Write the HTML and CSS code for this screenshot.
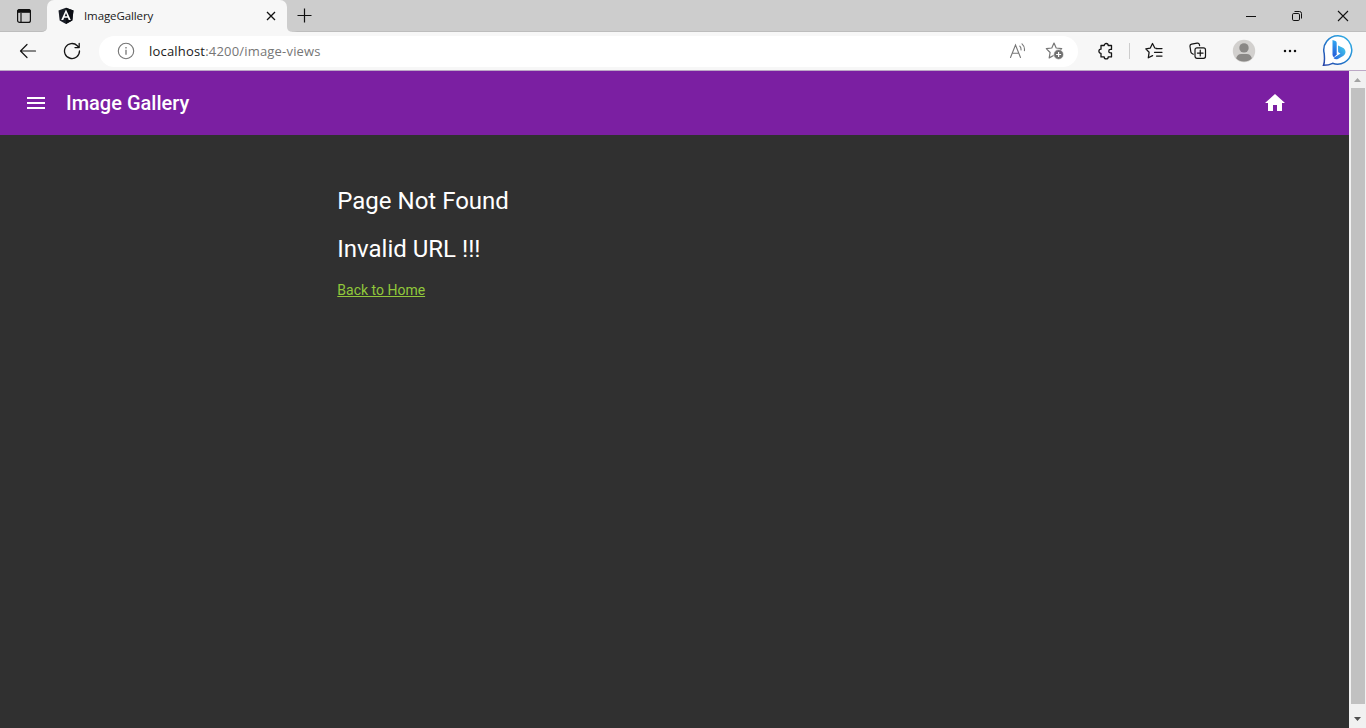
FILE: index.html
```html
<!DOCTYPE html>
<html lang="en">
<head>
<meta charset="utf-8">
<title>ImageGallery</title>
<link rel="stylesheet" href="styles.css">
</head>
<body>
<div class="browser">
  <div class="tabstrip">
    <div class="tab-menu">
      <svg width="16" height="16" viewBox="0 0 16 16" fill="none" stroke="#111" stroke-width="1.2"><rect x="1.6" y="1.6" width="12.8" height="12.8" rx="2"/><path d="M1.6 4.2V3.6a2 2 0 0 1 2-2h8.800a2 2 0 0 1 2 2v.6z" fill="#111"/><path d="M5 5v9.400"/></svg>
    </div>
    <div class="tab">
      <svg class="favicon" width="16" height="18" viewBox="0 0 16 18"><path d="M8 .8 15.500 3.400 14.300 13.400 8 17 1.700 13.400.5 3.400z" fill="#1b1e27"/><path d="M8 .8 15.500 3.400 14.300 13.400 8 17z" fill="#0c0e14"/><path d="M8 2.500 3.200 13h2.100l.8-2.200h3.800l.8 2.200h2.100zM8 6l1.300 3.200H6.700z" fill="#fff" fill-rule="evenodd"/></svg>
      <span class="tab-title">ImageGallery</span>
      <svg class="tab-close" width="10" height="10" viewBox="0 0 10 10" stroke="#111" stroke-width="1.300"><path d="m1 1 8 8M9 1 1 9"/></svg>
    </div>
    <svg class="new-tab" width="15" height="15" viewBox="0 0 15 15" stroke="#111" stroke-width="1.200"><path d="M7.500.5v14M.5 7.500h14"/></svg>
    <div class="window-buttons">
      <svg width="46" height="31" viewBox="0 0 46 31" stroke="#111"><path d="M18 16.500h10"/></svg>
      <svg width="46" height="31" viewBox="0 0 46 31" fill="none" stroke="#111"><rect x="18.500" y="13.500" width="7" height="7" rx="1.300"/><path d="M20.500 11.500h5a2 2 0 0 1 2 2v5"/></svg>
      <svg width="46" height="31" viewBox="0 0 46 31" stroke="#111" stroke-width="1.100"><path d="m18 11 10 10M28 11 18 21"/></svg>
    </div>
  </div>

  <div class="toolbar">
    <svg class="back" width="18" height="16" viewBox="0 0 18 16" fill="none" stroke="#151515" stroke-width="1.200" stroke-linecap="round" stroke-linejoin="round"><path d="M16.500 8H1.500M8 1.500 1.500 8 8 14.500"/></svg>
    <svg class="reload" width="18" height="18" viewBox="0 0 18 18" fill="none" stroke="#151515" stroke-width="1.300" stroke-linecap="round" stroke-linejoin="round"><path d="M16.500 9a7.500 7.500 0 1 1-2.200-5.300L16 5.500M16.200 1.400v4.200H12"/></svg>
    <div class="address">
      <svg class="info" width="18" height="18" viewBox="0 0 18 18" fill="none" stroke="#757575" stroke-width="1.100"><circle cx="9" cy="9" r="7.700"/><path d="M9 7.800v5M9 5v1.400" stroke-width="1.300"/></svg>
      <span class="url"><span class="host">localhost</span>:4200/image-views</span>
      <svg class="read-aloud" width="18" height="18" viewBox="0 0 18 18" fill="none" stroke="#777" stroke-width="1.100" stroke-linecap="round"><path d="m1.500 15.500 5-12.500 5 12.500M3.200 11.300h6.600M10.800 4.200q1.400 1.400 1.200 3.700M13 1.800q3 2.600 2.400 7"/></svg>
      <svg class="favorite-add" width="20" height="20" viewBox="0 0 20 20" fill="none" stroke="#777" stroke-width="1.200" stroke-linejoin="round"><path d="m9 2 2.200 5 5.500.6-4 3.800 1 5L9 14.300l-4.800 2.600.9-5.400-3.800-3.900L6.800 7z"/><circle cx="13.600" cy="13.500" r="4.900" fill="#707070" stroke="#fff" stroke-width=".6"/><path d="M13.600 11v5M11.100 13.500h5" stroke="#fff"/></svg>
    </div>
    <svg class="extensions" width="18" height="18" viewBox="0 0 18 18" fill="none" stroke="#151515" stroke-width="1.300" stroke-linejoin="round"><path d="M4 3.500h3.200a2 2 0 0 1 4 0h3.300v3.900h-1a1.750 1.750 0 0 0 0 3.500h1v4h-3.300a2 2 0 0 1-4 0H4v-3.500a2.100 2.100 0 0 1 0-4.200z"/></svg>
    <div class="divider"></div>
    <svg class="favorites" width="18" height="18" viewBox="0 0 18 18" fill="none" stroke="#151515" stroke-width="1.250" stroke-linecap="round" stroke-linejoin="round"><path d="M12.500 6.500 9.800 6 7.500 1.500 5.300 6.100.8 6.900l3.300 3.400-.8 5.500 4.300-2.200M11 6.500h6M9.500 10.300H17M11.500 14H17"/></svg>
    <svg class="collections" width="18" height="18" viewBox="0 0 18 18" fill="none" stroke="#151515" stroke-width="1.200" stroke-linecap="round"><path d="M4.300 12.200 3 11.500a2 2 0 0 1-1.100-1.400L1 4.500a2 2 0 0 1 1.600-2.300l5.500-1a2 2 0 0 1 2.300 1.500l.2.900"/><rect x="6" y="5.800" width="10.500" height="10.500" rx="2"/><path d="M11.250 8.200v5.700M8.400 11.050h5.700"/></svg>
    <svg class="profile" width="24" height="24" viewBox="0 0 24 24"><circle cx="12" cy="12" r="11.200" fill="#d2d0ce"/><circle cx="12" cy="8.900" r="4.700" fill="#8a8886"/><path d="M4.100 19.300q1.400-4.300 5-4.300h5.800q3.600 0 5 4.300a11.200 11.200 0 0 1-15.800 0z" fill="#8a8886"/></svg>
    <svg class="more" width="16" height="4" viewBox="0 0 16 4" fill="#111"><circle cx="3" cy="2" r="1.250"/><circle cx="8" cy="2" r="1.250"/><circle cx="13" cy="2" r="1.250"/></svg>
    <svg class="bing" width="32" height="34" viewBox="0 0 32 34">
      <defs>
        <linearGradient id="ring" x1="0" y1="1" x2="1" y2="0"><stop offset="0" stop-color="#2743a8"/><stop offset=".5" stop-color="#2180d0"/><stop offset="1" stop-color="#35b6e8"/></linearGradient>
        <linearGradient id="stem" x1="0" y1="0" x2="0" y2="1"><stop offset="0" stop-color="#31a9f2"/><stop offset="1" stop-color="#2458d7"/></linearGradient>
        <linearGradient id="bowl" x1="0" y1="1" x2="1" y2="0"><stop offset="0" stop-color="#2866df"/><stop offset="1" stop-color="#43d0ed"/></linearGradient>
      </defs>
      <path d="M16 1.800A14.200 14.200 0 1 1 10.600 29.300Q7 31.300 1.500 31.300 3 28 2.200 19.500A14.200 14.200 0 0 1 16 1.800z" fill="#fff" stroke="url(#ring)" stroke-width="1.500"/>
      <path d="m10.500 6 3 1.100q1.200.5 1.200 1.800v11.600l-2.700 2.700q-1.500-.6-1.500-2.600z" fill="url(#stem)"/>
      <path d="m16 11.400 4.300 2.100q3.300 1.500 3.200 4.700-.1 2.300-2 3.600l-5.200 3q-2.800 1.400-4.800-.8l7-4.500-1.400-.7q-.8-.4-1-1.300z" fill="url(#bowl)"/>
    </svg>
  </div>

  <div class="viewport">
    <div class="app">
      <header class="app-bar">
        <svg class="menu" width="24" height="24" viewBox="0 0 24 24" fill="#fff"><path d="M3 18h18v-2H3zm0-5h18v-2H3zm0-7v2h18V6z"/></svg>
        <h1 class="brand">Image Gallery</h1>
        <svg class="home" width="24" height="24" viewBox="0 0 24 24" fill="#fff"><path d="M10 20v-6h4v6h5v-8h3L12 3 2 12h3v8z"/></svg>
      </header>
      <main class="content">
        <h2 class="message">Page Not Found</h2>
        <h2 class="message">Invalid URL !!!</h2>
        <a class="home-link" href="#">Back to Home</a>
      </main>
    </div>
    <div class="scrollbar">
      <svg width="17" height="17" viewBox="0 0 17 17"><path d="m5 11 3.500-4 3.500 4z" fill="#a3a3a3"/></svg>
      <div class="thumb"></div>
      <svg width="17" height="17" viewBox="0 0 17 17"><path d="m5 6 3.500 4L12 6z" fill="#505050"/></svg>
    </div>
  </div>
</div>
</body>
</html>
```
FILE: styles.css
```css
* { box-sizing: border-box; }
body { margin: 0; overflow: hidden; }
svg { display: block; flex: none; }
.browser { width: 1366px; height: 728px; display: flex; flex-direction: column; font-family: "Open Sans", sans-serif; }

.tabstrip { height: 32px; flex: none; display: flex; background: #f7f7f7; }
.tab-menu { width: 47px; padding: 8px 0 0 16px; background: #cdcdcd; border-bottom: 1px solid #bdbdbd; border-radius: 0 0 5px 0; }
.tab { width: 240px; padding: 0 11px; display: flex; align-items: center; background: linear-gradient(#cdcdcd, #cdcdcd) top / 100% 8px no-repeat; position: relative; z-index: 0; }
.tab::before { content: ""; position: absolute; inset: 0; z-index: -1; background: #f7f7f7; border-radius: 7px 7px 0 0; }
.tab-title { margin-left: 10px; font-size: 11.5px; letter-spacing: -0.1px; line-height: 16px; color: #202020; }
.tab-close { margin-left: auto; }
.new-tab { box-sizing: content-box; padding: 8px 0; background: #cdcdcd; border-bottom: 1px solid #bdbdbd; border-left: 10px solid #cdcdcd; border-radius: 0 0 0 5px; }
.window-buttons { flex: 1; display: flex; justify-content: flex-end; background: #cdcdcd; border-bottom: 1px solid #bdbdbd; }

.toolbar { height: 39px; flex: none; display: flex; align-items: center; background: #f7f7f7; border-bottom: 1px solid #bca8c6; }
.back { margin-left: 19px; }
.reload { margin-left: 26px; }
.address { width: 979px; height: 31px; margin-left: 18px; padding: 0 13px 0 18px; display: flex; align-items: center; background: #fff; border-radius: 16px; }
.url { margin-left: 14px; font-size: 13px; letter-spacing: 0.19px; line-height: 18px; color: #767676; white-space: nowrap; }
.host { color: #202020; }
.read-aloud { margin-left: auto; }
.favorite-add { margin-left: 18px; }
.extensions { margin-left: 19px; }
.divider { width: 1px; height: 16px; margin-left: 14px; background: #cdcdcd; }
.favorites { margin-left: 15px; }
.collections { margin-left: 26px; }
.profile { margin-left: 25px; }
.more { margin-left: 26px; }
.bing { margin-left: 24px; }

.viewport { flex: 1; min-height: 0; display: flex; }
.app { flex: 1; background: #303030; color: #fff; font-family: Roboto, sans-serif; }
.app-bar { height: 64px; display: flex; align-items: center; padding: 0 62px 0 24px; background: #7b1fa2; }
.brand { margin: 0 0 0 18px; font-size: 20px; font-weight: 500; line-height: 32px; }
.home { margin-left: auto; }
.content { padding: 50px 0 0 337.3px; }
.message { margin: 0 0 16px; font-size: 24px; font-weight: 400; line-height: 32px; }
.home-link { display: block; width: max-content; margin-top: -1px; font-size: 14px; line-height: 20px; color: #91c83b; }
.scrollbar { width: 17px; display: flex; flex-direction: column; background: #f1f1f1; }
.thumb { flex: 1; margin: 0 1px 7px 2px; background: #c1c1c1; }
```
